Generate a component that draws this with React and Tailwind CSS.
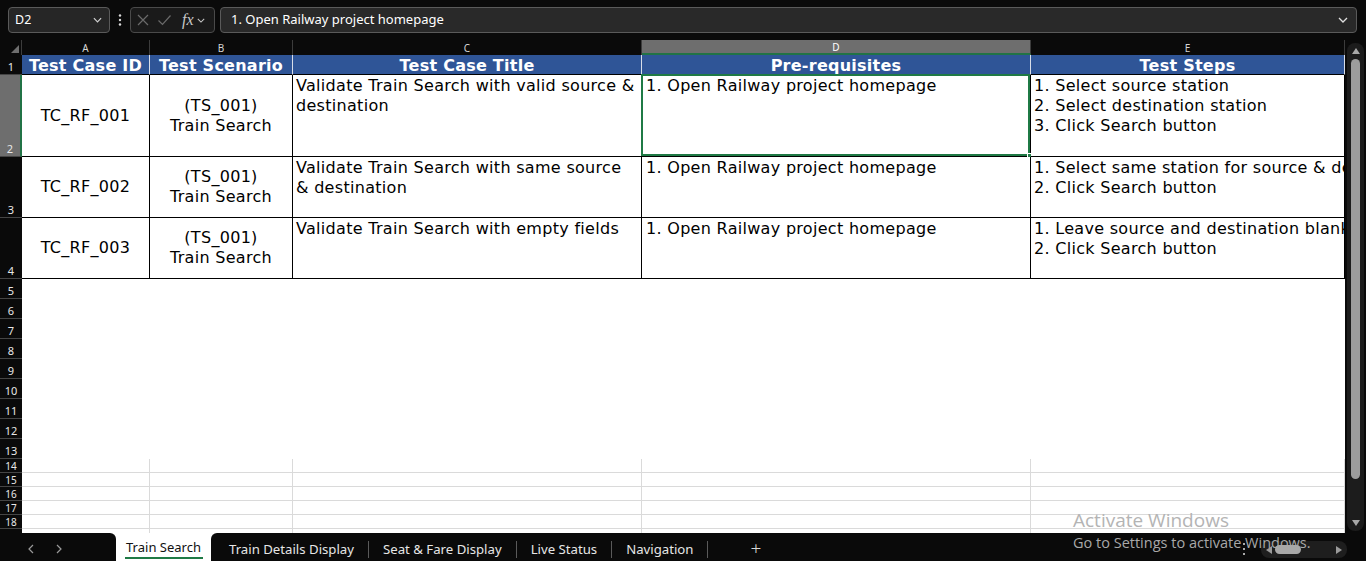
import React from "react";

const V = "font-['DejaVu_Sans',Verdana,sans-serif]";
const UI = "font-['Noto_Sans','Open_Sans',sans-serif]";

function Chevron({ className = "" }) {
  return (
    <svg viewBox="0 0 10 6" className={className} fill="none" stroke="currentColor" strokeWidth="1.3">
      <path d="M1 1l4 4 4-4" />
    </svg>
  );
}

function RowHead({ n, sel, small }) {
  return (
    <div
      className={`flex items-end justify-center border-b border-[#454545] ${
        sel ? "bg-[#6e6e6e] border-r-2 border-r-[#217346]" : "bg-[#0a0a0a]"
      } text-[#e8e8e8] ${small ? "text-[10px] leading-[12px]" : "text-[11px] leading-[12px] pb-[1px]"} ${UI}`}
    >
      {n}
    </div>
  );
}

const dataCell = `border-r border-b border-black bg-white text-black text-[16px] leading-[20px] tracking-[0.3px] ${V} whitespace-nowrap`;

function CenterCell({ lines }) {
  return (
    <div className={`${dataCell} overflow-hidden flex flex-col items-center justify-center`}>
      {lines.map((l, i) => (
        <div key={i}>{l}</div>
      ))}
    </div>
  );
}

function TopCell({ lines, pl = "pl-[4px]", children }) {
  return (
    <div className={`${dataCell} relative`}>
      <div className={`h-full overflow-hidden ${pl} pt-[1px]`}>
        {lines.map((l, i) => (
          <div key={i}>{l}</div>
        ))}
      </div>
      {children}
    </div>
  );
}

const rows = [
  {
    n: 2,
    id: "TC_RF_001",
    c: ["Validate Train Search with valid source &", "destination"],
    e: ["1. Select source station", "2. Select destination station", "3. Click Search button"],
  },
  {
    n: 3,
    id: "TC_RF_002",
    c: ["Validate Train Search with same source", "& destination"],
    e: ["1. Select same station for source & destination", "2. Click Search button"],
  },
  {
    n: 4,
    id: "TC_RF_003",
    c: ["Validate Train Search with empty fields"],
    e: ["1. Leave source and destination blank", "2. Click Search button"],
  },
];

export default function App() {
  const headers = ["Test Case ID", "Test Scenario", "Test Case Title", "Pre-requisites", "Test Steps"];
  const letters = ["A", "B", "C", "D", "E"];
  return (
    <div className={`w-[1366px] h-[561px] bg-[#0a0a0a] overflow-hidden flex flex-col relative ${UI}`}>
      {/* Formula bar */}
      <div className="h-[40px] flex items-start pt-[7px] pl-[8px] pr-[9px]">
        <div className="w-[102px] h-[26px] rounded-[4px] bg-[#262626] border border-[#5a5a5a] flex items-center justify-between pl-[6px] pr-[7px] text-white text-[12.5px]">
          <span>D2</span>
          <Chevron className="w-[9px] h-[6px] text-[#d0d0d0]" />
        </div>
        <div className="w-[20px] h-[26px] flex items-center justify-center">
          <svg viewBox="0 0 4 14" className="w-[4px] h-[14px]" fill="#d8d8d8">
            <circle cx="2" cy="2.5" r="1.2" />
            <circle cx="2" cy="7" r="1.2" />
            <circle cx="2" cy="11.5" r="1.2" />
          </svg>
        </div>
        <div className="w-[85px] h-[26px] rounded-[4px] bg-[#1a1a1a] border border-[#4a4a4a] flex items-center pl-[6px] gap-[8px]">
          <svg viewBox="0 0 12 12" className="w-[12px] h-[12px]" fill="none" stroke="#6a6a6a" strokeWidth="1.2">
            <path d="M1 1l10 10M11 1L1 11" />
          </svg>
          <svg viewBox="0 0 14 12" className="w-[15px] h-[12px]" fill="none" stroke="#6a6a6a" strokeWidth="1.2">
            <path d="M1 6.5l4 4L13 1.5" />
          </svg>
          <span className="text-[#c8c8c8] italic text-[16px] leading-none font-['Liberation_Serif',serif] ml-[2px]">fx</span>
          <Chevron className="w-[8px] h-[5px] text-[#c8c8c8] -ml-[5px]" />
        </div>
        <div className="ml-[5px] flex-1 h-[26px] rounded-[4px] bg-[#292929] border border-[#5a5a5a] flex items-center justify-between pl-[10px] pr-[8px] text-white text-[13px]">
          <span>1. Open Railway project homepage</span>
          <Chevron className="w-[10px] h-[6px] text-[#e0e0e0]" />
        </div>
      </div>

      {/* Sheet */}
      <div className="flex h-[493px]">
        <div className="grid w-[1345px] grid-cols-[22px_128px_143px_349px_389px_314px] grid-rows-[15px_20px_82px_61px_61px_repeat(9,20px)_repeat(5,14px)_4px] bg-white">
          {/* column headers */}
          <div className="bg-[#0a0a0a] border-r border-[#3c3c3c] relative">
            <svg viewBox="0 0 8 8" className="absolute right-[2px] bottom-[2px] w-[8px] h-[8px]">
              <path d="M8 0V8H0Z" fill="#6e6e6e" />
            </svg>
          </div>
          {letters.map((l) => (
            <div
              key={l}
              className={`flex items-center justify-center text-[10px] leading-none border-r border-[#3c3c3c] ${
                l === "D" ? "bg-[#6e6e6e] text-white border-b-2 border-b-[#217346]" : "bg-[#0a0a0a] text-[#d6d6d6]"
              } ${UI}`}
            >
              {l}
            </div>
          ))}

          {/* row 1 */}
          <RowHead n={1} />
          {headers.map((h) => (
            <div
              key={h}
              className={`bg-[#2f5597] text-white font-bold text-[16px] leading-[18px] tracking-[0.25px] ${V} flex items-center justify-center pt-[3px] border-r border-[#d8dde8] border-b border-b-black whitespace-nowrap overflow-hidden`}
            >
              {h}
            </div>
          ))}

          {/* data rows */}
          {rows.map((r) => (
            <React.Fragment key={r.n}>
              <RowHead n={r.n} sel={r.n === 2} />
              <CenterCell lines={[r.id]} />
              <CenterCell lines={["(TS_001)", "Train Search"]} />
              <TopCell lines={r.c} pl="pl-[3px]" />
              <TopCell lines={["1. Open Railway project homepage"]} pl="pl-[4px]">
                {r.n === 2 && (
                  <>
                    <div className="absolute -left-[1px] -top-[1px] right-0 bottom-0 border-2 border-[#1f7a45]" />
                    <div className="absolute -right-[3px] -bottom-[3px] w-[6px] h-[6px] bg-[#1f7a45] border border-white" />
                  </>
                )}
              </TopCell>
              <TopCell lines={r.e} pl="pl-[3px]" />
            </React.Fragment>
          ))}

          {/* empty rows 5-13 */}
          {[5, 6, 7, 8, 9, 10, 11, 12, 13].map((n) => (
            <React.Fragment key={n}>
              <RowHead n={n} />
              <div className="col-span-5 bg-white" />
            </React.Fragment>
          ))}
          {/* rows 14-18 */}
          {[14, 15, 16, 17, 18].map((n) => (
            <React.Fragment key={n}>
              <RowHead n={n} small />
              {[0, 1, 2, 3, 4].map((c) => (
                <div key={c} className="bg-white border-r border-b border-[#dadada]" />
              ))}
            </React.Fragment>
          ))}
          <div className="bg-[#0a0a0a]" />
          {[0, 1, 2, 3, 4].map((c) => (
            <div key={c} className="bg-white border-r border-[#dadada]" />
          ))}
        </div>

        {/* vertical scrollbar */}
        <div className="w-[21px] bg-[#0a0a0a] flex flex-col items-center pt-[3px] pb-[2px]">
          <div className="w-[17px] flex-1 rounded-[8px] bg-[#1c1c1c] flex flex-col items-center pt-[5px] pb-[5px]">
            <svg viewBox="0 0 8 6" className="w-[8px] h-[6px]">
              <path d="M4 0L8 6H0Z" fill="#a8a8a8" />
            </svg>
            <div className="mt-[5px] w-[9px] h-[420px] rounded-[5px] bg-[#9c9c9c]" />
            <div className="flex-1" />
            <svg viewBox="0 0 8 6" className="w-[8px] h-[6px]">
              <path d="M0 0H8L4 6Z" fill="#a8a8a8" />
            </svg>
          </div>
        </div>
      </div>

      {/* Sheet tabs */}
      <div className="flex-1 flex bg-white">
        <div className="w-[116px] bg-[#0a0a0a] rounded-tr-[6px] flex items-center pl-[28px] pt-[3px] gap-[22px] text-[#9a9a9a]">
          <svg viewBox="0 0 6 10" className="w-[6px] h-[10px]" fill="none" stroke="currentColor" strokeWidth="1.2">
            <path d="M5 1L1 5l4 4" />
          </svg>
          <svg viewBox="0 0 6 10" className="w-[6px] h-[10px]" fill="none" stroke="currentColor" strokeWidth="1.2">
            <path d="M1 1l4 4-4 4" />
          </svg>
        </div>
        <div className="w-[95px] bg-white flex flex-col items-center justify-center text-[#111] text-[13px] leading-[16px] pt-[4px]">
          <span>Train Search</span>
          <div className="w-[78px] h-[2px] bg-[#1f7a45] mt-[2px]" />
        </div>
        <div className="flex-1 bg-[#0a0a0a] rounded-tl-[6px] flex items-center pl-[4px] text-[#e6e6e6] text-[13.2px] relative">
          {["Train Details Display", "Seat & Fare Display", "Live Status", "Navigation"].map((t) => (
            <React.Fragment key={t}>
              <span className="px-[14px] pt-[5px]">{t}</span>
              <div className="w-[1px] h-[17px] bg-[#5a5a5a] mt-[5px]" />
            </React.Fragment>
          ))}
          <span className="ml-[42px] text-[19px] font-light text-[#d8d8d8] leading-none pt-[3px]">+</span>
          <div className="flex-1" />
          <svg viewBox="0 0 4 14" className="w-[4px] h-[14px] mr-[15px] mt-[4px]" fill="#e0e0e0">
            <circle cx="2" cy="2" r="1" />
            <circle cx="2" cy="7" r="1" />
            <circle cx="2" cy="12" r="1" />
          </svg>
          <div className="w-[86px] h-[17px] mt-[5px] mr-[19px] rounded-[8px] bg-[#1e1e1e] flex items-center pl-[5px] pr-[5px]">
            <svg viewBox="0 0 6 8" className="w-[6px] h-[8px]">
              <path d="M6 0V8L0 4Z" fill="#9a9a9a" />
            </svg>
            <div className="ml-[3px] w-[26px] h-[9px] rounded-[5px] bg-[#a8a8a8]" />
            <div className="flex-1" />
            <svg viewBox="0 0 6 8" className="w-[6px] h-[8px]">
              <path d="M0 0V8L6 4Z" fill="#9a9a9a" />
            </svg>
          </div>
        </div>
      </div>

      {/* Activate Windows watermark */}
      <div className={`absolute left-[1073px] top-[508px] pointer-events-none font-['Open_Sans',sans-serif]`}>
        <div className="text-[19px] leading-[25px] text-[#b4b4b4]">Activate Windows</div>
        <div className="text-[14.5px] leading-[20px] text-[#a8a8a8]">Go to Settings to activate Windows.</div>
      </div>
    </div>
  );
}
